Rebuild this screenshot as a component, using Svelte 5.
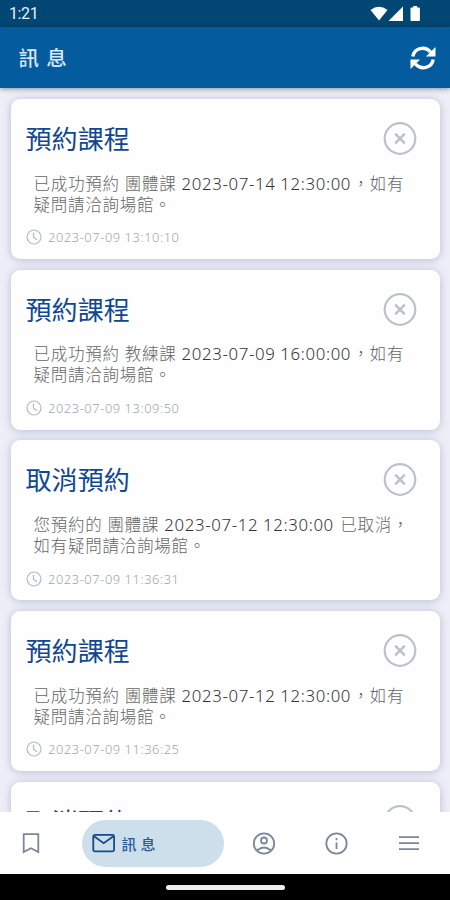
<script>
  const messages = [
    { title: '預約課程', lead: '已成功預約 團體課 ', when: '2023-07-14 12:30:00', tail: '，如有', rest: '疑問請洽詢場館。', sent: '2023-07-09 13:10:10' },
    { title: '預約課程', lead: '已成功預約 教練課 ', when: '2023-07-09 16:00:00', tail: '，如有', rest: '疑問請洽詢場館。', sent: '2023-07-09 13:09:50' },
    { title: '取消預約', lead: '您預約的 團體課 ', when: '2023-07-12 12:30:00', tail: ' 已取消，', rest: '如有疑問請洽詢場館。', sent: '2023-07-09 11:36:31' },
    { title: '預約課程', lead: '已成功預約 團體課 ', when: '2023-07-12 12:30:00', tail: '，如有', rest: '疑問請洽詢場館。', sent: '2023-07-09 11:36:25' },
    { title: '取消預約' },
  ];
</script>

<div class="screen" lang="zh-TW">
  <div class="status">
    <span class="clock">1:21</span>
    <svg width="51" height="18" viewBox="0 0 51 18" fill="#fff">
      <path d="M0.500 5Q9 -1.500 17.500 5L9 15.500Z" />
      <path d="M33 1.500V16H18.500Z" />
      <path d="M41.200 2.500h2V1h4v1.500h2q.7 0 .7.700v12.100q0 .7-.7.700h-8q-.7 0-.7-.7V3.200q0-.7.7-.7Z" />
    </svg>
  </div>

  <header>
    <h1>訊 息</h1>
    <button class="refresh" aria-label="重新整理">
      <svg width="26" height="24" viewBox="0 0 26 24" fill="none" stroke="#fff" stroke-width="3.400">
        <path d="M2.800 10.500C4.300 1.800 15 -.5 20.500 6" />
        <path d="M23.200 13.500C21.700 22.200 11 24.500 5.500 18" />
        <path d="M25.500 1V10.600H15.900Z" fill="#fff" stroke="none" />
        <path d="M.5 23V13.400H10.100Z" fill="#fff" stroke="none" />
      </svg>
    </button>
  </header>

  <main>
    {#each messages as msg}
      <article>
        <div class="card-head">
          <h2>{msg.title}</h2>
          <button class="close" aria-label="刪除">
            <svg width="34" height="34" viewBox="0 0 34 34" fill="none" stroke="#bcc2cb">
              <circle cx="17" cy="16.500" r="15.300" stroke-width="2.200" />
              <path d="M12.200 11.700l9.600 9.600M21.800 11.700l-9.600 9.600" stroke-width="2.500" />
            </svg>
          </button>
        </div>
        {#if msg.sent}
          <div class="text">
            <div class="line">
              <span>{msg.lead}</span><span class="when">{msg.when}</span><span>{msg.tail}</span>
            </div>
            <div class="line">{msg.rest}</div>
          </div>
          <div class="sent">
            <svg width="16" height="16" viewBox="0 0 16 16" fill="none" stroke="#b4bac0" stroke-width="1.200">
              <circle cx="8" cy="8" r="7" />
              <path d="M7.500 3.500V8.300L11 10.700" />
            </svg>
            <time>{msg.sent}</time>
          </div>
        {/if}
      </article>
    {/each}
  </main>

  <nav>
    <button class="item" aria-label="書籤">
      <svg width="18" height="22" viewBox="0 0 18 22"><path d="M1.700 2.200H16.300V20L9 16.300L1.700 20Z" /></svg>
    </button>
    <button class="item active">
      <svg width="24" height="20" viewBox="0 0 24 20">
        <rect x="1.300" y="1.900" width="20.800" height="16.400" rx="1.500" />
        <path d="M2 3.300L11.700 10.200L21.400 3.300" />
      </svg>
      <span>訊 息</span>
    </button>
    <button class="item" aria-label="會員">
      <svg width="24" height="24" viewBox="0 0 24 24">
        <circle cx="12" cy="12.500" r="10.200" />
        <circle cx="12" cy="9.500" r="3" />
        <path d="M5.200 19.300Q12 13.700 18.800 19.300" />
      </svg>
    </button>
    <button class="item" aria-label="資訊">
      <svg width="24" height="24" viewBox="0 0 24 24">
        <circle cx="11.500" cy="12.500" r="10.200" />
        <path d="M11.500 7V9.300M11.500 11.500V18" />
      </svg>
    </button>
    <button class="item" aria-label="選單">
      <svg width="20" height="18" viewBox="0 0 20 18"><path d="M0 3.200H20M0 9.200H20M0 15.200H20" /></svg>
    </button>
  </nav>

  <div class="gesture"><span></span></div>
</div>

<style>
  :global(body) {
    margin: 0;
  }

  .screen {
    display: flex;
    flex-direction: column;
    width: 450px;
    height: 900px;
    overflow: hidden;
    background: #edeef8;
    font-family: 'Noto Sans', 'Noto Sans CJK TC', sans-serif;
  }

  button {
    display: flex;
    padding: 0;
    border: 0;
    background: none;
    font: inherit;
  }

  .status {
    display: flex;
    flex: none;
    align-items: center;
    justify-content: space-between;
    box-sizing: border-box;
    height: 27px;
    padding: 0 29px 0 9px;
    background: #024674;
  }

  .clock {
    font: 400 16px/29px Roboto, sans-serif;
    letter-spacing: -0.4px;
    color: #e8f0f8;
  }

  header {
    z-index: 1;
    display: flex;
    flex: none;
    align-items: center;
    justify-content: space-between;
    box-sizing: border-box;
    height: 61px;
    padding: 0 14px 0 18.500px;
    background: #045c9f;
    box-shadow: 0 1px 5px rgba(0, 0, 0, 0.4);
  }

  h1 {
    margin: 0;
    font-size: 20.500px;
    font-weight: 500;
    line-height: 28px;
    letter-spacing: 1px;
    color: #d9e7f6;
  }

  main {
    display: flex;
    flex: 1;
    flex-direction: column;
    gap: 10.700px;
    min-height: 0;
    padding: 10.900px 10.500px 0 11px;
    overflow: hidden;
  }

  article {
    flex: none;
    box-sizing: border-box;
    height: 160px;
    padding: 22px 22.500px 0 14.500px;
    border-radius: 9px;
    background: #fefeff;
    box-shadow: 0 1px 9px rgba(90, 110, 140, 0.36);
  }

  .card-head {
    display: flex;
    align-items: center;
    justify-content: space-between;
    height: 36px;
  }

  h2 {
    margin: 0;
    font-size: 26px;
    font-weight: 400;
    line-height: 36px;
    letter-spacing: 0.1px;
    color: #0f4793;
  }

  .text {
    margin: 15.800px 0 0 8px;
    font-size: 16.500px;
    font-weight: 300;
    line-height: 21px;
    letter-spacing: 0.75px;
    color: #666;
  }

  .line {
    display: flex;
    height: 21px;
    white-space: pre;
  }

  .when {
    margin-right: 1.500px;
    font-size: 16.800px;
    letter-spacing: 0.63px;
    color: #333;
  }

  .sent {
    display: flex;
    align-items: center;
    gap: 6.500px;
    height: 16px;
    margin-top: 14.500px;
    font-size: 12.800px;
    font-weight: 300;
    letter-spacing: 0.6px;
    color: #a0a5aa;
  }

  nav {
    z-index: 1;
    display: grid;
    flex: none;
    grid-template-columns: 62px 182px 40px 105px 40px;
    align-items: center;
    height: 62px;
    background: #fff;
  }

  .item {
    align-items: center;
    justify-content: center;
  }

  .item svg {
    fill: none;
    stroke: #7a889a;
    stroke-width: 1.8;
  }

  .active {
    gap: 5.500px;
    justify-content: flex-start;
    justify-self: center;
    box-sizing: border-box;
    width: 142px;
    height: 47px;
    padding-left: 10px;
    border-radius: 24px;
    background: #cddfeb;
    font-size: 15px;
    font-weight: 500;
    color: #2a5a94;
  }

  .active svg {
    stroke: #174a8b;
  }

  .gesture {
    display: flex;
    flex: none;
    align-items: center;
    justify-content: center;
    height: 26px;
    background: #000;
  }

  .gesture span {
    width: 119px;
    height: 5px;
    border-radius: 3px;
    background: #eee;
  }
</style>
